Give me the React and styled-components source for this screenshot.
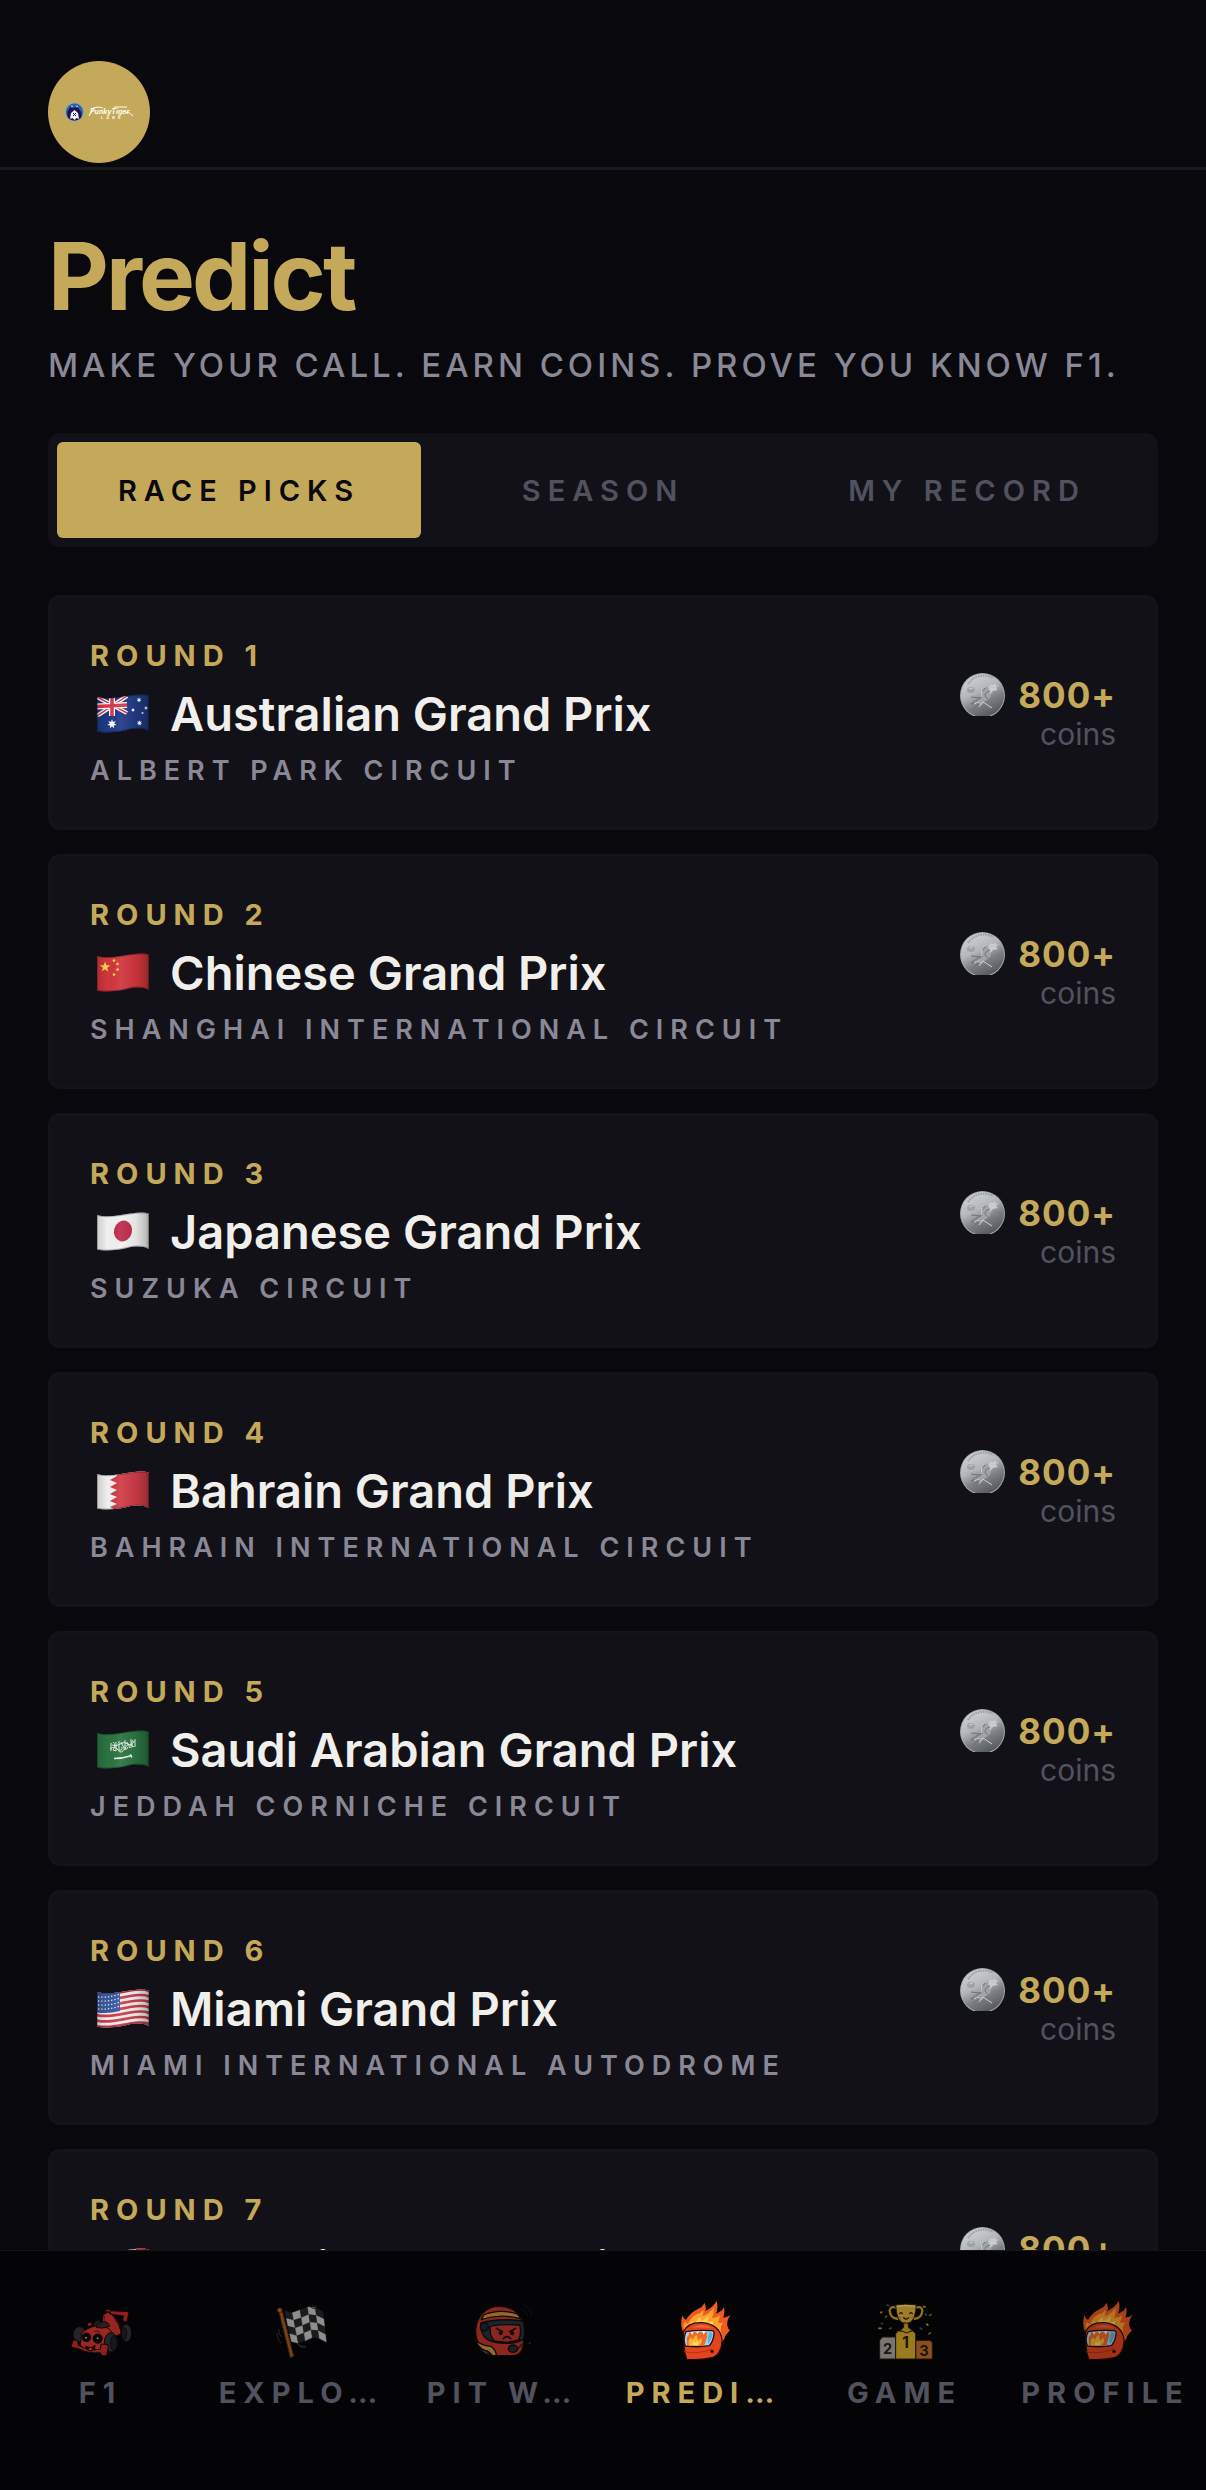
import { useState } from 'react'
import styled, { createGlobalStyle } from 'styled-components'

const GlobalStyle = createGlobalStyle`
  * {
    box-sizing: border-box;
  }

  body {
    margin: 0;
    background-color: #09080d;
    color: #f0efeb;
    font-family: 'Inter', 'Liberation Sans', sans-serif;
  }
`

const Screen = styled.div`
  display: flex;
  flex-direction: column;
  height: 100vh;
`

const Header = styled.header`
  display: flex;
  flex-shrink: 0;
  padding: 61px 48px 4px;
  border-bottom: 3px solid #1a191f;
`

const LogoLink = styled.a`
  display: flex;
  width: 102px;
  height: 102px;
  border-radius: 50%;
  background-color: #c4a95a;
`

const Content = styled.main`
  flex: 1;
  min-height: 0;
  overflow-y: auto;
  scrollbar-width: none;
  padding: 48px 48px 24px;
`

const Title = styled.h1`
  margin: 0;
  color: #c4a95a;
  font-size: 94px;
  line-height: 116px;
  font-weight: 700;
  letter-spacing: -3px;
`

const Subtitle = styled.p`
  margin: 12px 0 48px;
  color: #8a8896;
  font-size: 33px;
  line-height: 39px;
  font-weight: 500;
  letter-spacing: 4px;
  text-transform: uppercase;
`

const Tabs = styled.div`
  display: flex;
  padding: 9px;
  margin-bottom: 48px;
  border-radius: 12px;
  background-color: #121117;
`

const Tab = styled.button`
  flex: 1;
  height: 96px;
  padding: 0;
  border: none;
  border-radius: 6px;
  background-color: ${props => props.$active ? '#c4a95a' : 'transparent'};
  color: ${props => props.$active ? '#09080d' : '#52515e'};
  font-family: inherit;
  font-size: 29px;
  font-weight: 600;
  letter-spacing: 7px;
  text-transform: uppercase;
  cursor: pointer;
`

const RaceList = styled.ul`
  display: flex;
  flex-direction: column;
  gap: 24px;
  margin: 0;
  padding: 0;
  list-style: none;
`

const RaceCard = styled.li`
  display: flex;
  align-items: center;
  justify-content: space-between;
  padding: 39px;
  border: 3px solid #141319;
  border-radius: 12px;
  background-color: #121117;
`

const RaceInfo = styled.div`
  display: flex;
  flex-direction: column;
  gap: 10px;
`

const Round = styled.div`
  color: #c4a95a;
  font-size: 29px;
  line-height: 38px;
  font-weight: 700;
  letter-spacing: 7px;
  text-transform: uppercase;
`

const RaceName = styled.h2`
  display: flex;
  align-items: center;
  gap: 14px;
  margin: 0;
  font-size: 47px;
  line-height: 58px;
  font-weight: 600;
`

const Circuit = styled.div`
  color: #8a8896;
  font-size: 27px;
  line-height: 35px;
  font-weight: 600;
  letter-spacing: 7px;
  text-transform: uppercase;
`

const Reward = styled.div`
  display: flex;
  flex-direction: column;
  align-items: flex-end;
`

const RewardAmount = styled.div`
  display: flex;
  align-items: flex-start;
  gap: 13px;
  color: #c4a95a;
  font-size: 35px;
  line-height: 44px;
  font-weight: 700;
  letter-spacing: 1px;
`

const RewardUnit = styled.div`
  color: #52515e;
  font-size: 30px;
  line-height: 35px;
`

const BottomNav = styled.nav`
  display: flex;
  flex-shrink: 0;
  height: 240px;
  border-top: 1px solid #15141a;
  background-color: #040406;
`

const NavItem = styled.a`
  display: flex;
  flex: 1;
  flex-direction: column;
  align-items: center;
  gap: 12px;
  min-width: 0;
  padding-top: 50px;
  color: ${props => props.$active ? '#c4a95a' : '#52515e'};
  text-decoration: none;

  svg {
    flex-shrink: 0;
    opacity: ${props => props.$active ? 1 : 0.7};
  }
`

const NavLabel = styled.span`
  font-size: 29px;
  line-height: 40px;
  font-weight: 700;
  letter-spacing: 7px;
  text-transform: uppercase;
  white-space: nowrap;
`

const Logo = () => (
  <svg width="102" height="102" viewBox="0 0 102 102" role="img" aria-label="PunkyTiger Labs">
    <circle cx="26.5" cy="51" r="9.5" fill="#86a9b4" />
    <circle cx="26.5" cy="51" r="8.5" fill="#2b62a6" />
    <path d="M20 57q-2-6 1-9l2-3 3 2 3-2 2 3q4 4 2 9-7 5-13 0z" fill="#1b1450" />
    <path d="M22 58l1-6 3.500-3 3.500 3 1 6-2.500-1-2 2-2-2z" fill="#f2effa" />
    <circle cx="24" cy="45.500" r="1" fill="#9cc6f4" />
    <circle cx="29" cy="45.500" r="1" fill="#9cc6f4" />
    <path d="M25 52l3 3m0-3l-3 3" stroke="#1b1450" strokeWidth="1" />
    <text x="42" y="53" fill="#fffdf2" fontSize="7" fontStyle="italic" fontWeight="700" fontFamily="Inter, sans-serif">PunkyTiger</text>
    <path d="M41 55l4-8q5-2 10 0M66 46h13M77 51q5 0 8 4" fill="none" stroke="#fffdf2" strokeWidth="1" />
    <text x="53" y="58" fill="#fffdf2" fontSize="4" fontWeight="600" letterSpacing="3" fontFamily="Inter, sans-serif">LABS</text>
  </svg>
)

const star = (cx, cy, r, points, inner) => {
  const list = []
  for (let i = 0; i < points * 2; i++) {
    const a = (Math.PI * i) / points - Math.PI / 2
    const d = i % 2 ? r * inner : r
    list.push(`${cx + d * Math.cos(a)},${cy + d * Math.sin(a)}`)
  }
  return list.join(' ')
}

const stripes = [0, 1, 2, 3, 4, 5, 6]

const flagArt = {
  au: (
    <>
      <path d="M0 0h52v40H0z" fill="#1f3a85" />
      <path d="M0 3l30 16M30 2L0 22" stroke="#fff" strokeWidth="4" />
      <path d="M0 3l30 16M30 2L0 22" stroke="#d8384a" strokeWidth="1.500" />
      <path d="M15 0v22M0 12.500l30-1.500" stroke="#fff" strokeWidth="6" />
      <path d="M15 0v22M0 12.500l30-1.500" stroke="#d8384a" strokeWidth="3.500" />
      <path d="M0 22.500q14 2 30-2V40H0z" fill="#1f3a85" />
      <polygon points={star(15, 30, 5, 7, 0.450)} fill="#fff" />
      <polygon points={star(42, 6, 2.500, 7, 0.500)} fill="#fff" />
      <polygon points={star(36, 16, 2, 7, 0.500)} fill="#fff" />
      <polygon points={star(49, 14, 2, 7, 0.500)} fill="#fff" />
      <polygon points={star(45.500, 19, 1.500, 5, 0.500)} fill="#fff" />
      <polygon points={star(42.500, 29, 2.800, 7, 0.500)} fill="#fff" />
    </>
  ),
  cn: (
    <>
      <path d="M0 0h52v40H0z" fill="#d0363d" />
      <polygon points={star(8, 14, 5.500, 5, 0.400)} fill="#f8d548" />
      <polygon points={star(17, 7.500, 2, 5, 0.500)} fill="#f8d548" />
      <polygon points={star(20.500, 11, 2, 5, 0.500)} fill="#f8d548" />
      <polygon points={star(20.500, 16.500, 2, 5, 0.500)} fill="#f8d548" />
      <polygon points={star(17, 21.500, 2, 5, 0.500)} fill="#f8d548" />
    </>
  ),
  jp: (
    <>
      <path d="M0 0h52v40H0z" fill="#f1f1f1" />
      <ellipse cx="26" cy="19" rx="9" ry="10.500" fill="#bd2c4c" transform="rotate(15 26 19)" />
    </>
  ),
  bh: (
    <>
      <path d="M0 0h52v40H0z" fill="#efefef" />
      <path d="M52 0H20v5l-7 4 7 3-7 4 7 3-7 4 7 3-7 4 7 3-7 3 6 3v4h33z" fill="#cf3b47" />
    </>
  ),
  sa: (
    <>
      <path d="M0 0h52v40H0z" fill="#2b7441" />
      <path d="M14 13v8M16 12q4 3 0 8l3 1V12M22 11v9q3 1 3-3M24 12l4 8M28 10v9q2 1 3-2M30 12l3 6M34 9v9M36 10q-3 4 1 7M38 9v8M13 19q5-4 8 1t7-2 8-1M15 15q4 2 8-1t8 0 6-3" fill="none" stroke="#e2efe6" strokeWidth="1" />
      <path d="M17 28.500q9 0 18-3M33 24.500l2 3" fill="none" stroke="#e2efe6" strokeWidth="1.500" />
    </>
  ),
  us: (
    <>
      <path d="M0 0h52v40H0z" fill="#f3eeee" />
      {stripes.map(i => (
        <path key={i} d={`M0 ${i * 5.500 + 4}C10 ${i * 5.500 + 7} 24 ${i * 5.500 + 3} 33 ${i * 5.500 + 1.500}S48 ${i * 5.500} 52 ${i * 5.500 + 2}`} fill="none" stroke="#c9404c" strokeWidth="2.700" />
      ))}
      <path d="M0 0h23v22q-12 3-23 1.500z" fill="#3a5a9c" />
      <path d="M1 8q11 1 22-3M1 12q11 1 22-3M1 16q11 1 22-3M1 20q11 1 22-3" fill="none" stroke="#e6ecf8" strokeWidth="1.300" strokeDasharray="1.300 2" />
    </>
  ),
  ca: (
    <>
      <path d="M0 0h52v40H0z" fill="#efefef" />
      <path d="M0 0h13v40H0zM39 0h13v40H39z" fill="#d0363d" />
      <path d="M26 8l3 5 3-1-1 5 4-1-2 5-5 3h-4l-5-3-2-5 4 1-1-5 3 1z" fill="#d0363d" />
    </>
  ),
}

const Flag = ({ code }) => (
  <svg width="66" height="40" viewBox="-7 0 66 40" aria-hidden="true">
    <defs>
      <clipPath id={`flag-${code}`}>
        <path d="M0 3C10 6 24 3 33 1.500S48 0 52 1.500V37C46 34 38 34 30 36S8 39.500 0 37.500z" />
      </clipPath>
      <linearGradient id={`fold-${code}`} x1="0" x2="1">
        <stop offset="0" stopColor="#000" stopOpacity="0.150" />
        <stop offset="0.200" stopColor="#000" stopOpacity="0" />
        <stop offset="0.450" stopColor="#fff" stopOpacity="0.070" />
        <stop offset="0.750" stopColor="#000" stopOpacity="0.060" />
        <stop offset="0.930" stopColor="#000" stopOpacity="0.200" />
        <stop offset="1" stopColor="#000" stopOpacity="0.350" />
      </linearGradient>
    </defs>
    <g clipPath={`url(#flag-${code})`}>
      {flagArt[code]}
      <path d="M0 0h52v40H0z" fill={`url(#fold-${code})`} />
      <path d="M0 3C10 6 24 3 33 1.500S48 0 52 1.500V37C46 34 38 34 30 36S8 39.500 0 37.500z" fill="none" stroke="#000" strokeOpacity="0.250" strokeWidth="2" />
    </g>
  </svg>
)

const Coin = ({ id }) => (
  <svg width="45" height="43" viewBox="0 0 45 43" aria-hidden="true">
    <defs>
      <linearGradient id={`coin-${id}`} x1="0.200" y1="0" x2="0.700" y2="1">
        <stop offset="0" stopColor="#d2d5d7" />
        <stop offset="0.400" stopColor="#b4b7ba" />
        <stop offset="0.650" stopColor="#7d8185" />
        <stop offset="1" stopColor="#515458" />
      </linearGradient>
    </defs>
    <circle cx="22.500" cy="22.500" r="22.500" fill="#a4a8ab" />
    <circle cx="22.500" cy="22.500" r="21.500" fill={`url(#coin-${id})`} />
    <path d="M8 11A19 19 0 0 1 33 5" fill="none" stroke="#979b9e" strokeWidth="2" strokeDasharray="1.500 1" />
    <path d="M25 15q3-3 5-1l2 4-2 7-4 3-5 4-4-1 2-6 2-6z" fill="#a0a4a8" />
    <path d="M28 14l3-3 1 2 4-3-1 3 4-1-3 3 2 2-5 1-3 3z" fill="#c6c9cc" />
    <ellipse cx="11" cy="17" rx="4" ry="3" fill="#9ea2a5" />
    <path d="M25 15q-5 4-4 10-6 2-10 6 5-1 8 0-5 2-6 6M21 25l-10-1M24 29l9 5-6-1 2 4M30 18q-5 1-5 5l3 3" fill="none" stroke="#6f7377" strokeWidth="1" />
    <path d="M22 17l-1 7M14 31l5-2M19 34l4-5 9 6M31 13l5-1M31 16l5 0M9 16l4-1" fill="none" stroke="#cfd2d4" strokeWidth="1" />
  </svg>
)

const CarIcon = () => (
  <svg width="60" height="60" viewBox="0 0 180 180" aria-hidden="true">
    <g stroke="#1a0706" strokeWidth="3" strokeLinejoin="round">
      <path d="M116 29l58 3-6 31-14-4 4-14-38-5z" fill="#c52b25" />
      <ellipse cx="80" cy="72" rx="12" ry="14" fill="#232a2d" />
      <path d="M50 76l-1-10 12-2 2 8M98 30l16-6 6 8" fill="#c52b25" />
      <path d="M94 62l2-20 14-8 14 8 20 30 8 26-26 10-34-26z" fill="#d2332b" />
      <ellipse cx="166" cy="96" rx="16" ry="26" fill="#2d3538" />
      <ellipse cx="159" cy="98" rx="8" ry="18" fill="#1d2326" />
      <ellipse cx="26" cy="100" rx="20" ry="23" fill="#2d3538" />
      <path d="M32 96q16-16 46-22 30-4 46 22l-8 36-26 18-40 4-22-22z" fill="#d8372e" />
      <path d="M76 80q4-16 22-18 14 0 18 14-20 8-40 4z" fill="#3e2b2c" />
      <ellipse cx="120" cy="124" rx="20" ry="29" fill="#2d3538" />
      <ellipse cx="129" cy="126" rx="10" ry="22" fill="#1d2326" />
      <path d="M6 117l14 2 2 14q30 16 66 12l2-16 20 2 2 8-6 26-14-2-4-8q-34 4-66-12L0 139z" fill="#c72c26" />
      <circle cx="46" cy="109" r="13" fill="#0b0b0d" />
      <circle cx="80" cy="113" r="14" fill="#0b0b0d" />
      <path d="M44 135q14 10 28-2 0 18-14 17-12-3-14-15z" fill="#3c0a0c" />
    </g>
    <circle cx="45" cy="110" r="3" fill="#bbb" />
    <circle cx="80" cy="112" r="3" fill="#bbb" />
    <path d="M102 46q-6 8 0 14M124 40l24 34M30 92q8-6 14-2M70 92q10-4 18 2" fill="none" stroke="#6b1411" strokeWidth="3" />
    <path d="M52 144q6-5 12 0l-5 4z" fill="#e86a5d" />
  </svg>
)

// corner of a cell on the waving checkered cloth
const clothPoint = (u, v) => {
  const x = 38 + u * 23 + v * 5 - (u * v) / 2
  const y = 26 + v * 23 + 9 * Math.sin(u * 1.300 + 0.400)
  return `${x},${y}`
}

const checks = []
for (let u = 0; u < 5; u++) {
  for (let v = 0; v < 4; v++) {
    checks.push({
      points: [clothPoint(u, v), clothPoint(u + 1, v), clothPoint(u + 1, v + 1), clothPoint(u, v + 1)].join(' '),
      fill: (u + v) % 2 ? '#cbc9c6' : '#262628',
    })
  }
}

const CheckeredIcon = () => (
  <svg width="60" height="60" viewBox="0 0 180 180" aria-hidden="true">
    <g stroke="#343434" strokeWidth="3" strokeLinejoin="round">
      {checks.map(check => (
        <polygon key={check.points} points={check.points} fill={check.fill} stroke={check.fill} strokeWidth="1" />
      ))}
      <path d="M112 14q8 10 22 10M120 12q6 6 16 6M76 128q10 10 26 8M80 134q10 6 20 6M14 96q2 18 14 32M20 84q0 16 8 24" fill="none" stroke="#31373f" />
      <path d="M19 26l10-4 36 144-10 4z" fill="#a65f24" stroke="#4a260c" />
      <circle cx="23" cy="28" r="7" fill="#b96b2a" stroke="#4a260c" />
    </g>
  </svg>
)

const HeadsetIcon = () => (
  <svg width="60" height="60" viewBox="0 0 180 180" aria-hidden="true">
    <g stroke="#160909" strokeWidth="4" strokeLinejoin="round">
      <path d="M78 16c44 0 74 26 76 70l-4 50c-3 20-14 28-32 28H66c-16 0-28-4-38-18C12 124 6 106 8 84c4-42 34-68 70-68z" fill="#c4352a" />
      <path d="M32 42q46-20 102-3l11 15q-62-18-120 2z" fill="#c99a3a" />
      <path d="M8 116q14 18 46 20 16 12 16 28H58Q50 150 34 148 14 138 8 116z" fill="#c99a3a" />
      <path d="M14 134q12 14 28 16l8 12q-22-2-36-28z" fill="#226387" />
      <path d="M24 66q56-16 126-6 8 26 2 54-20 14-50 13-40 0-60-12-22-20-18-49z" fill="#20333f" />
      <path d="M52 76q30-8 88-4 6 20-2 44-30 12-74 4-16-18-12-44z" fill="#c4352a" />
      <circle cx="34" cy="78" r="12" fill="#182a37" />
      <path d="M146 128q-6 14-16 16" fill="none" stroke="#252a30" strokeWidth="5" />
      <ellipse cx="120" cy="143" rx="14" ry="11" fill="#252c33" />
    </g>
    <path d="M70 82l18 10M128 82l-18 10" stroke="#160909" strokeWidth="5" strokeLinecap="round" />
    <circle cx="83" cy="97" r="6" fill="#160909" />
    <circle cx="118" cy="97" r="6" fill="#160909" />
    <path d="M91 113q10-12 22 0" fill="none" stroke="#160909" strokeWidth="5" strokeLinecap="round" />
    <path d="M150 10q22 8 26 34M146 24q14 6 18 22" fill="none" stroke="#0c161e" strokeWidth="4" />
    <circle cx="170" cy="126" r="3" fill="#1f4158" />
  </svg>
)

const FireHelmetIcon = () => (
  <svg width="60" height="60" viewBox="0 0 180 180" aria-hidden="true">
    <path d="M28 96Q16 68 26 42q2 12 10 14Q52 32 72 24 86 18 92 6q6 14 2 24 24-12 34-30 6 20-2 38 20-8 24-20 4 16-2 32 12-2 22-8-12 14-10 32 2 10 8 14-8 10-14 16-2 12-10 20z" fill="#ed5a22" />
    <path d="M32 90q-6-16 0-28 4 6 10 6 10-20 26-28 14-4 20-14 2 12-2 20 22-10 34-26 0 16-6 32 16-2 24-10-2 14-6 22 8 4 16 0-8 10-8 22 0 12 6 18-8 2-10 12z" fill="#fba32c" />
    <path d="M44 84q0-16 12-22 2 6 6 6 8-14 18-20 0 8 2 12 14-6 22-16 0 12-4 20 10 0 18-4-2 10-2 16 8 6 12 20l-20 8z" fill="#ffd352" />
    <path d="M28 92C38 72 60 64 84 65c36 2 58 24 60 52 1 28-12 50-34 54-24 5-48 6-72 4-8-24-10-54-10-83z" fill="#e3451f" stroke="#2a0b08" strokeWidth="4" strokeLinejoin="round" />
    <path d="M54 80q30-16 60 2-28-6-60-2z" fill="#f4694a" />
    <path d="M36 92q34-6 78-3 8 1 6 11-3 22-14 34-32 6-72 1-8-22 2-43z" fill="#9bd8ef" stroke="#2a0b08" strokeWidth="4" strokeLinejoin="round" />
    <path d="M38 108q6-2 8-14h54l-1 14-8 26q-28 3-52-1z" fill="#ef6a26" />
    <path d="M50 93h8l-3 9zM66 92h8l-3 7zM84 91h10l-5 10z" fill="#fff" />
    <path d="M44 133q-2-14 6-24 4 4 6 8 4-10 12-16 4 12 4 18l10-8q6 10-4 20-16 4-34 2z" fill="#fdb833" />
    <path d="M56 132q0-6 5-9l4 3 6-6q3 7 0 13z" fill="#ffe06a" />
    <path d="M106 94q8-2 10 4-3 20-14 30-4-16 4-34z" fill="#5eb3dc" />
    <path d="M30 152q36 10 84-8" fill="none" stroke="#b9300f" strokeWidth="3" />
    <circle cx="114" cy="151" r="5" fill="#2a0b08" />
  </svg>
)

const PodiumIcon = () => (
  <svg width="60" height="60" viewBox="0 0 180 180" aria-hidden="true">
    <g stroke="#2b1c08" strokeWidth="3" strokeLinejoin="round">
      <path d="M14 118l8-10h40v66H14z" fill="#aaa5a2" />
      <path d="M122 118h42l8 6v50h-50z" fill="#c66d30" />
      <path d="M62 98l8-8h44l8 8v76H62z" fill="#dcae2b" />
      <path d="M64 20q-18-6-20 8 0 24 26 26M122 20q18-6 20 8 0 24-26 26" fill="none" stroke="#c99a2a" strokeWidth="7" />
      <path d="M62 12q30-6 62 0-2 40-18 52-12 8-26 0-16-12-18-52z" fill="#e0b23a" />
      <path d="M87 66h12l2 14 12 8-18 8-20-8 10-8z" fill="#d0a02e" />
    </g>
    <path d="M66 16q28-4 54 0" stroke="#ffe28a" strokeWidth="4" fill="none" />
    <path d="M74 38q4-6 8 0M104 38q4-6 8 0M86 50q8 8 15 0" fill="none" stroke="#3a2204" strokeWidth="4" strokeLinecap="round" />
    <circle cx="75" cy="49" r="4" fill="#e58a2e" />
    <circle cx="112" cy="49" r="4" fill="#e58a2e" />
    <g fill="none" strokeWidth="5">
      <path d="M16 36l6-4M10 82l10 0M154 68l6 6M144 16l8 2" stroke="#c99b36" />
      <path d="M18 66l6 4M134 80l8 6M34 12l8 2" stroke="#2a5b87" />
      <path d="M162 44l8-4M160 100l8-6M30 50l6-6" stroke="#8f6b22" />
      <path d="M42 84l8-4M150 38l5 5" stroke="#3b7148" />
    </g>
    <g fontFamily="Inter, sans-serif" fontWeight="700" fill="#2b1c08" textAnchor="middle">
      <text x="38" y="158" fontSize="44">2</text>
      <text x="92" y="140" fontSize="46">1</text>
      <text x="147" y="164" fontSize="44">3</text>
    </g>
  </svg>
)

const App = () => {
  const [tab, setTab] = useState('Race Picks')

  return (
    <Screen>
      <GlobalStyle />
      <Header>
        <LogoLink href="#home">
          <Logo />
        </LogoLink>
      </Header>

      <Content>
        <Title>Predict</Title>
        <Subtitle>Make your call. Earn coins. Prove you know F1.</Subtitle>

        <Tabs>
          {tabs.map(name => (
            <Tab key={name} type="button" $active={name === tab} onClick={() => setTab(name)}>
              {name}
            </Tab>
          ))}
        </Tabs>

        <RaceList>
          {races.map((race, i) => (
            <RaceCard key={race.name}>
              <RaceInfo>
                <Round>Round {i + 1}</Round>
                <RaceName>
                  <Flag code={race.flag} />
                  {race.name}
                </RaceName>
                <Circuit>{race.circuit}</Circuit>
              </RaceInfo>
              <Reward>
                <RewardAmount>
                  <Coin id={race.flag} />
                  800+
                </RewardAmount>
                <RewardUnit>coins</RewardUnit>
              </Reward>
            </RaceCard>
          ))}
        </RaceList>
      </Content>

      <BottomNav>
        {pages.map(page => (
          <NavItem key={page.name} href={page.linkURL} aria-label={page.name} $active={page.name === 'Predict'}>
            {page.icon}
            <NavLabel>{page.short || page.name}</NavLabel>
          </NavItem>
        ))}
      </BottomNav>
    </Screen>
  )
}

const tabs = ['Race Picks', 'Season', 'My Record']

const races = [
  { name: 'Australian Grand Prix', circuit: 'Albert Park Circuit', flag: 'au' },
  { name: 'Chinese Grand Prix', circuit: 'Shanghai International Circuit', flag: 'cn' },
  { name: 'Japanese Grand Prix', circuit: 'Suzuka Circuit', flag: 'jp' },
  { name: 'Bahrain Grand Prix', circuit: 'Bahrain International Circuit', flag: 'bh' },
  { name: 'Saudi Arabian Grand Prix', circuit: 'Jeddah Corniche Circuit', flag: 'sa' },
  { name: 'Miami Grand Prix', circuit: 'Miami International Autodrome', flag: 'us' },
  { name: 'Canadian Grand Prix', circuit: 'Circuit Gilles Villeneuve', flag: 'ca' },
]

// short is the tab bar label where the full name has no room
const pages = [
  { name: 'F1', icon: <CarIcon />, linkURL: '#f1' },
  { name: 'Explore', short: 'Explo…', icon: <CheckeredIcon />, linkURL: '#explore' },
  { name: 'Pit Wall', short: 'Pit W…', icon: <HeadsetIcon />, linkURL: '#pit-wall' },
  { name: 'Predict', short: 'Predi…', icon: <FireHelmetIcon />, linkURL: '#predict' },
  { name: 'Game', icon: <PodiumIcon />, linkURL: '#game' },
  { name: 'Profile', icon: <FireHelmetIcon />, linkURL: '#profile' },
]

export default App
